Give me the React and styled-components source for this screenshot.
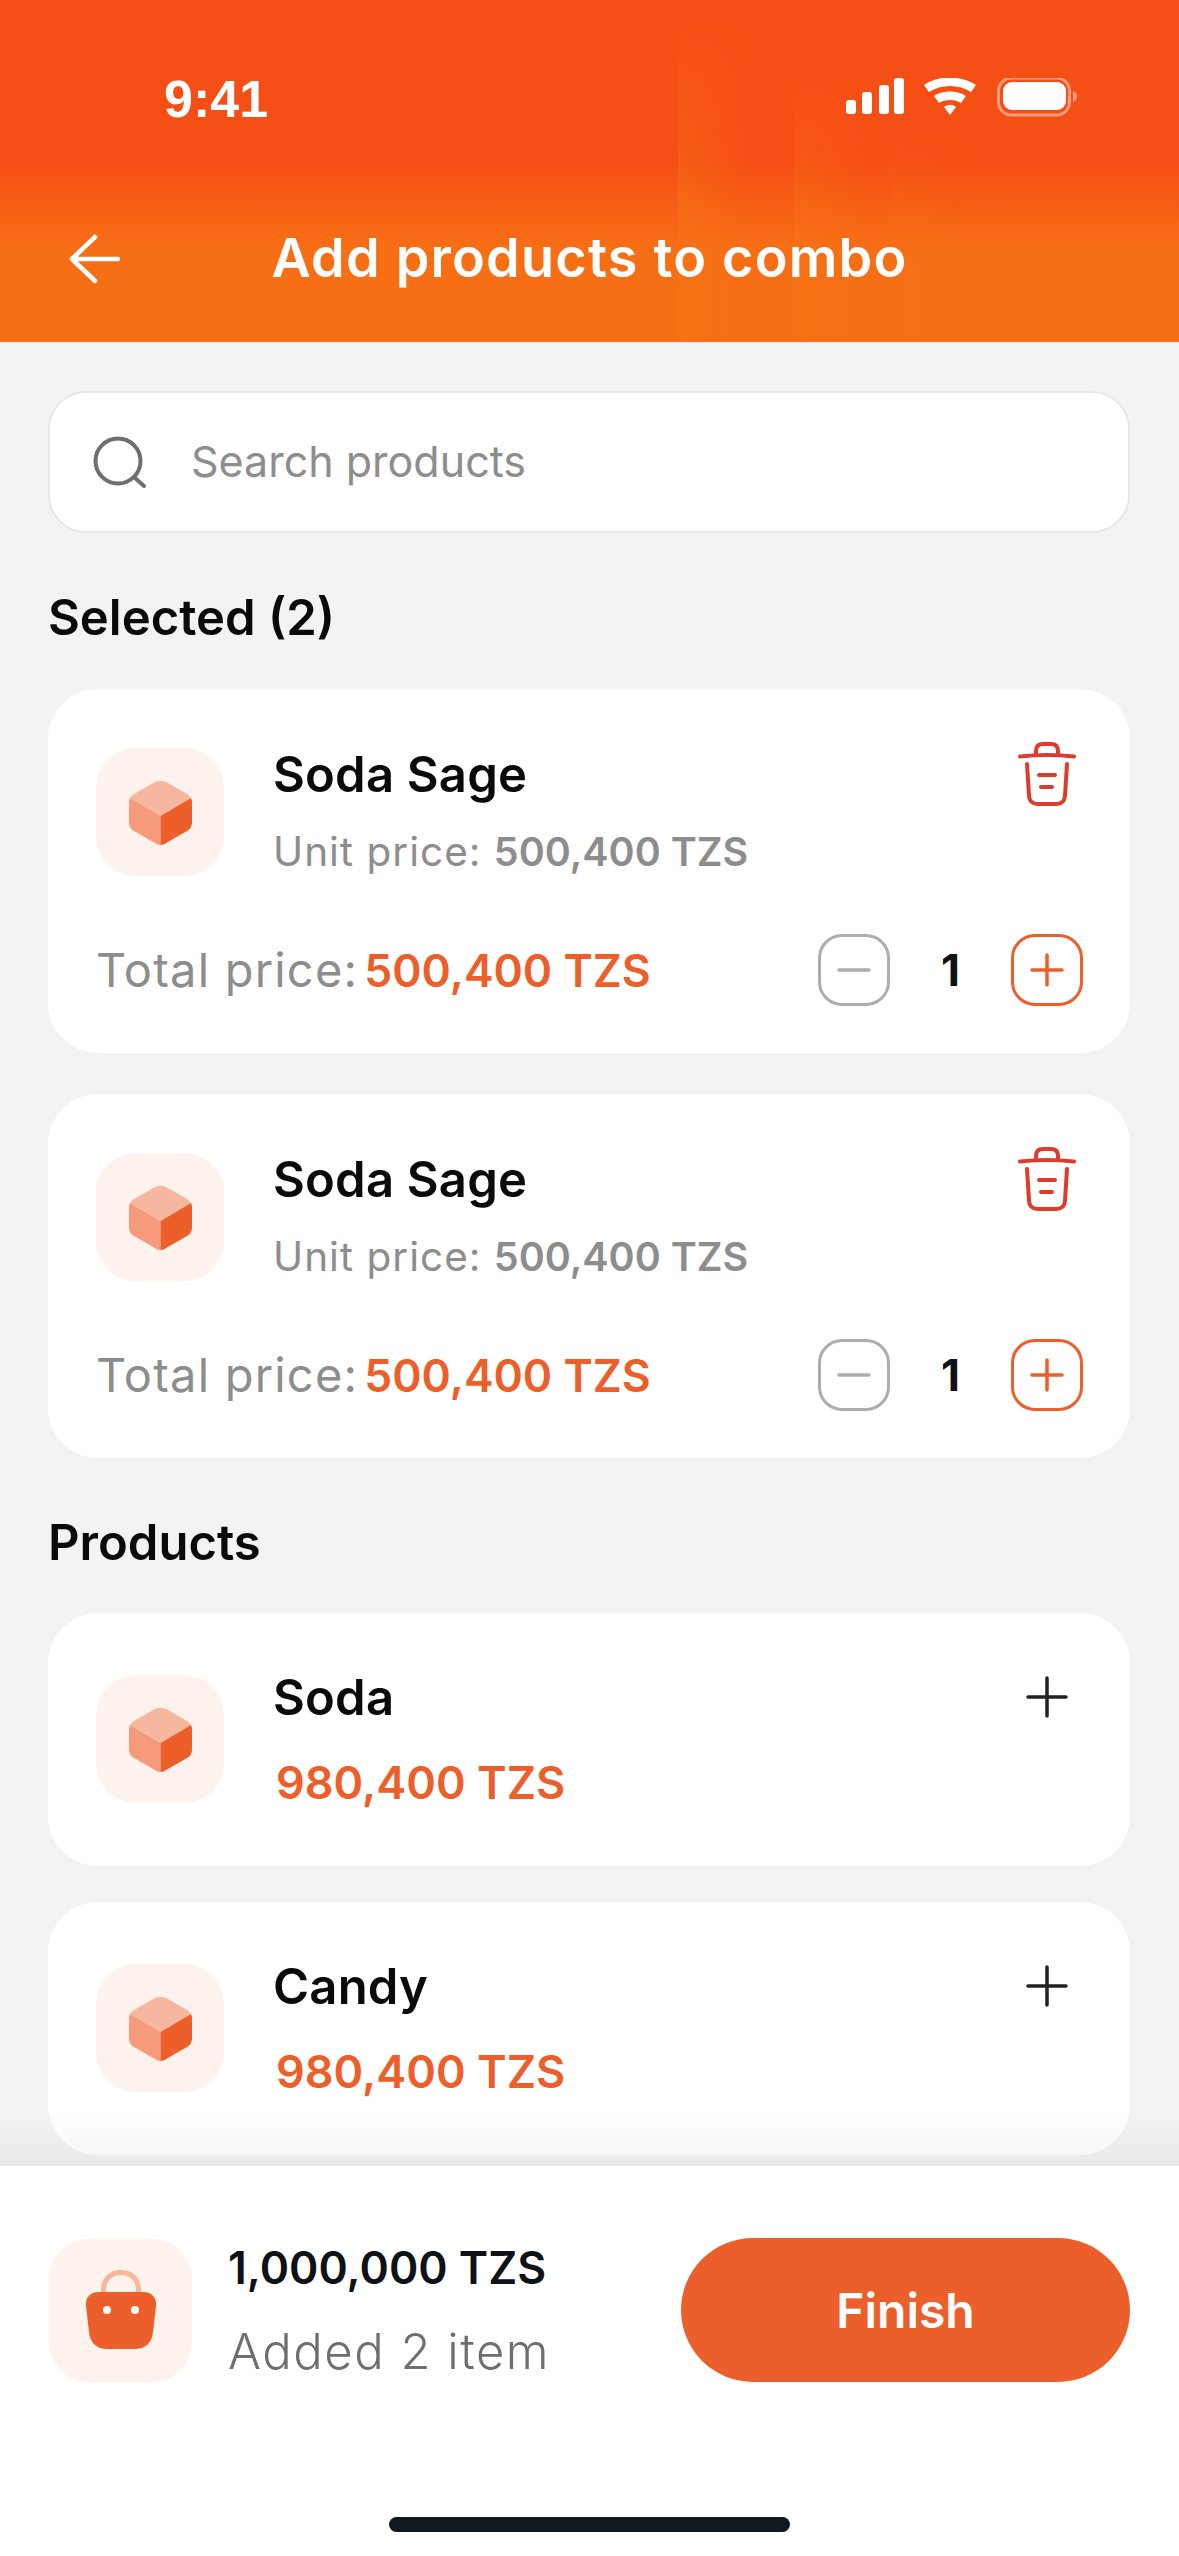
import React from 'react';
import styled, { createGlobalStyle } from 'styled-components';

const orange = '#ec5f2a';

const GlobalStyle = createGlobalStyle`
  html, body {
    margin: 0;
    padding: 0;
    background: #f3f3f3;
  }
  * {
    box-sizing: border-box;
  }
`;

const Page = styled.div`
  width: 1179px;
  height: 2556px;
  display: flex;
  flex-direction: column;
  overflow: hidden;
  background: #f3f3f3;
  font-family: Inter, 'Open Sans', sans-serif;
  color: #0e1116;
`;

const Header = styled.header`
  position: relative;
  height: 342px;
  flex-shrink: 0;
  color: #fff;
  background: linear-gradient(180deg, #f64f15 0, #f64f15 165px, #f76f15 250px, #f76f15 100%);
`;

// faint vertical light bands behind the header text
const Band = styled.div`
  position: absolute;
  left: ${({ $left }) => $left}px;
  top: ${({ $top }) => $top}px;
  bottom: 0;
  width: ${({ $width }) => $width}px;
  background: linear-gradient(90deg, rgba(247, 115, 22, ${({ $alpha }) => $alpha}), rgba(247, 115, 22, 0));
  -webkit-mask-image: linear-gradient(180deg, transparent, #000 65%);
  mask-image: linear-gradient(180deg, transparent, #000 65%);
`;

const StatusBar = styled.div`
  position: relative;
  height: 192px;
  padding: 73px 101px 0 164px;
  display: flex;
  justify-content: space-between;
  align-items: flex-start;
`;

const Clock = styled.span`
  font-family: 'Liberation Sans', Arial, sans-serif;
  font-size: 52px;
  font-weight: 700;
  line-height: 52px;
`;

const StatusIcons = styled.svg`
  display: block;
  margin-top: 5px;
`;

const TitleRow = styled.div`
  position: relative;
  display: flex;
  justify-content: center;
  align-items: center;
  height: 76px;
  margin-top: 28px;
`;

const BackIcon = styled.svg`
  position: absolute;
  left: 69px;
  top: 14px;
`;

const Title = styled.h1`
  margin: 0;
  font-size: 54px;
  font-weight: 600;
  line-height: 76px;
  letter-spacing: 1.2px;
`;

const Content = styled.main`
  flex: 1;
  min-height: 0;
  overflow: hidden;
  padding: 49px 49px 0 48px;
`;

const SearchBox = styled.div`
  height: 142px;
  display: flex;
  align-items: center;
  gap: 44px;
  padding: 0 43px;
  background: #fff;
  border: 2px solid #e7e7e7;
  border-radius: 38px;
`;

const Placeholder = styled.span`
  margin-top: -2px;
  font-size: 43px;
  font-weight: 400;
  color: #8d8d8d;
`;

const SectionTitle = styled.h2`
  margin: ${({ $top }) => $top}px 0 ${({ $bottom }) => $bottom}px 0;
  font-size: 49px;
  font-weight: 600;
  line-height: 60px;
  color: #0a0a0a;
`;

const Card = styled.section`
  background: #fff;
  border-radius: 50px;
  padding: ${({ $compact }) => ($compact ? '62px 47px 0 48px' : '59px 47px 49px 48px')};
  height: ${({ $compact }) => ($compact ? '253px' : '364px')};
  margin-bottom: ${({ $gap }) => $gap}px;
`;

const TopRow = styled.div`
  display: flex;
  align-items: flex-start;
`;

const Tile = styled.div`
  width: ${({ $size }) => $size}px;
  height: ${({ $size }) => $size}px;
  flex-shrink: 0;
  display: flex;
  align-items: center;
  justify-content: center;
  background: #fef2ec;
  border-radius: 40px;
`;

const Info = styled.div`
  flex: 1;
  margin-left: 49px;
  padding-top: ${({ $compact }) => ($compact ? '0' : '1px')};
`;

const Name = styled.div`
  font-size: 49px;
  font-weight: 600;
  line-height: 52px;
  letter-spacing: 0.2px;
  color: #0a0a0a;
  margin-top: ${({ $compact }) => ($compact ? '-3px' : '0')};
`;

const UnitPrice = styled.div`
  margin-top: 25px;
  font-size: 40.500px;
  font-weight: 400;
  letter-spacing: 1px;
  line-height: 52px;
  color: #8d8d8d;

  b {
    font-size: 39.500px;
    font-weight: 600;
    letter-spacing: 0;
  }
`;

const ProductPrice = styled.div`
  margin: 33px 0 0 3px;
  font-size: 45px;
  font-weight: 600;
  line-height: 52px;
  color: ${orange};
`;

const CornerIcon = styled.svg`
  flex-shrink: 0;
  margin: ${({ $margin }) => $margin};
`;

const BottomRow = styled.div`
  display: flex;
  align-items: center;
  justify-content: space-between;
  margin-top: 56px;
  height: 71px;
`;

const TotalLabel = styled.div`
  font-size: 47px;
  font-weight: 400;
  letter-spacing: 1.2px;
  color: #8d8d8d;

  b {
    margin-left: 6px;
    font-size: 44.500px;
    font-weight: 600;
    letter-spacing: 0;
    color: ${orange};
  }
`;

const Stepper = styled.div`
  display: flex;
  align-items: center;
`;

const StepButton = styled.div`
  width: 72px;
  height: 72px;
  display: flex;
  align-items: center;
  justify-content: center;
  border: 3px solid ${({ $color }) => $color};
  border-radius: 24px;
`;

const Quantity = styled.span`
  width: 121px;
  text-align: center;
  font-size: 44px;
  font-weight: 700;
  color: #0e1116;
`;

const BottomBar = styled.footer`
  position: relative;
  flex-shrink: 0;
  height: 390px;
  padding: 72px 49px 24px 49px;
  background: #fff;

  &::before {
    content: '';
    position: absolute;
    left: 0;
    right: 0;
    bottom: 100%;
    height: 56px;
    background: linear-gradient(180deg, rgba(0, 0, 0, 0), rgba(0, 0, 0, 0.04));
  }
`;

const Summary = styled.div`
  height: 144px;
  display: flex;
  align-items: center;
`;

const SummaryText = styled.div`
  flex: 1;
  margin-left: 36px;
`;

const Amount = styled.div`
  font-size: 44.500px;
  font-weight: 600;
  line-height: 52px;
  color: #0e1116;
`;

const Added = styled.div`
  margin-top: 32px;
  font-size: 49px;
  font-weight: 300;
  letter-spacing: 1.5px;
  line-height: 52px;
  color: #6e6e6e;
`;

const FinishButton = styled.button`
  width: 449px;
  height: 144px;
  border: none;
  border-radius: 72px;
  background: ${orange};
  color: #fff;
  font-family: inherit;
  font-size: 48px;
  font-weight: 600;
`;

const HomeIndicator = styled.div`
  width: 401px;
  height: 15px;
  margin: 135px auto 0;
  border-radius: 8px;
  background: #101820;
`;

const Cube = () => (
  <svg width="63" height="65" viewBox="0 0 63 65">
    <path fill="#f7b79e" d="M25 2.5Q31.5-1 38 2.5L58 14Q61 16 62 18L31.5 36 1 18Q2 16 5 14Z" />
    <path fill="#f59a7a" d="M1 18L31.5 36V65Q28 65 25 62.5L5 51Q0 48 0 43V22Q0 20 1 18Z" />
    <path fill={orange} d="M62 18L31.5 36V65Q35 65 38 62.5L58 51Q63 48 63 43V22Q63 20 62 18Z" />
  </svg>
);

const Bag = () => (
  <svg width="72" height="80" viewBox="0 0 72 80">
    <path fill="none" stroke="#f7b79e" strokeWidth="5" d="M18.500 24V20C18.500 9 26 2.500 36 2.500S53.500 9 53.500 20V24" />
    <path
      fill={orange}
      d="M14 22H58C67 22 72 28 71 36L68 62C67 73 60 79 50 79H22C12 79 5 73 4 62L1 36C0 28 5 22 14 22Z"
    />
    <circle cx="22" cy="40" r="4" fill="#fff" />
    <circle cx="50" cy="40" r="4" fill="#fff" />
  </svg>
);

const Trash = () => (
  <CornerIcon as="svg" $margin="-6px 7px 0 0" width="58" height="64" viewBox="0 0 58 64" fill="none" stroke="#de3a2e" strokeWidth="4" strokeLinecap="round">
    <path d="M2 14.5Q29 11.500 56 14.500" />
    <path d="M18 12V9Q18 2 25 2H33Q40 2 40 9V12" />
    <path d="M9 22L11 54Q11.500 62 20 62H38Q46.500 62 47 54L49 22" />
    <path d="M21 33H37M23 45H34" />
  </CornerIcon>
);

const AddIcon = () => (
  <CornerIcon as="svg" $margin="1px 15px 0 0" width="42" height="42" viewBox="0 0 42 42" stroke="#222" strokeWidth="3.5" strokeLinecap="round">
    <path d="M21 2V40M2 21H40" />
  </CornerIcon>
);

const selected = [{ id: 1 }, { id: 2 }];

const products = [
  { name: 'Soda', price: '980,400 TZS' },
  { name: 'Candy', price: '980,400 TZS' },
];

const App = () => (
  <Page>
    <GlobalStyle />
    <Header>
      <Band $left={678} $top={20} $width={72} $alpha={0.6} />
      <Band $left={794} $top={75} $width={80} $alpha={0.55} />
      <Band $left={890} $top={130} $width={85} $alpha={0.3} />
      <StatusBar>
        <Clock>9:41</Clock>
        <StatusIcons width="232" height="40" viewBox="0 0 232 40">
          <g fill="#fff">
            <rect x="0" y="22" width="10" height="14" rx="3" />
            <rect x="16" y="14" width="10" height="22" rx="3" />
            <rect x="33" y="7" width="10" height="29" rx="3" />
            <rect x="48" y="0" width="10" height="36" rx="3" />
            <path d="M78 7C92-3 115-3 130 7L125 14C113 6 95 6 83 14Z" />
            <path d="M88 18C96 12 112 12 120 18L115 25C109 21 99 21 93 25Z" />
            <path d="M98 29C102 26 106 26 110 29L104 37Z" />
            <rect x="157" y="4" width="63" height="28" rx="9" />
          </g>
          <rect x="152.500" y="0" width="71" height="37" rx="13" fill="none" stroke="#fff" strokeOpacity="0.45" strokeWidth="3" />
          <path d="M227 13C230 14 231 16 231 18.500S230 23 227 24Z" fill="#fff" fillOpacity="0.45" />
        </StatusIcons>
      </StatusBar>
      <TitleRow>
        <BackIcon width="52" height="50" viewBox="0 0 52 50" fill="none" stroke="#fff" strokeWidth="4.500" strokeLinecap="round" strokeLinejoin="round">
          <path d="M26 3L3 25 26 47M3 25H49" />
        </BackIcon>
        <Title>Add products to combo</Title>
      </TitleRow>
    </Header>

    <Content>
      <SearchBox>
        <svg width="54" height="52" viewBox="0 0 54 52" fill="none" stroke="#6f6f6f" strokeWidth="4" strokeLinecap="round">
          <circle cx="25" cy="25" r="22.500" />
          <path d="M42 42L51 50" />
        </svg>
        <Placeholder>Search products</Placeholder>
      </SearchBox>

      <SectionTitle $top={55} $bottom={41}>Selected (2)</SectionTitle>
      {selected.map((item, i) => (
        <Card key={item.id} $gap={i === 0 ? 41 : 0}>
          <TopRow>
            <Tile $size={128}>
              <Cube />
            </Tile>
            <Info>
              <Name>Soda Sage</Name>
              <UnitPrice>
                Unit price: <b>500,400 TZS</b>
              </UnitPrice>
            </Info>
            <Trash />
          </TopRow>
          <BottomRow>
            <TotalLabel>
              Total price:<b>500,400 TZS</b>
            </TotalLabel>
            <Stepper>
              <StepButton $color="#adadad">
                <svg width="34" height="4" viewBox="0 0 34 4" stroke="#adadad" strokeWidth="3.500" strokeLinecap="round">
                  <path d="M2 2H32" />
                </svg>
              </StepButton>
              <Quantity>1</Quantity>
              <StepButton $color={orange}>
                <svg width="34" height="34" viewBox="0 0 34 34" stroke={orange} strokeWidth="3.500" strokeLinecap="round">
                  <path d="M17 2V32M2 17H32" />
                </svg>
              </StepButton>
            </Stepper>
          </BottomRow>
        </Card>
      ))}

      <SectionTitle $top={55} $bottom={40}>Products</SectionTitle>
      {products.map(product => (
        <Card key={product.name} $compact $gap={36}>
          <TopRow>
            <Tile $size={128}>
              <Cube />
            </Tile>
            <Info $compact>
              <Name $compact>{product.name}</Name>
              <ProductPrice>{product.price}</ProductPrice>
            </Info>
            <AddIcon />
          </TopRow>
        </Card>
      ))}
    </Content>

    <BottomBar>
      <Summary>
        <Tile $size={143}>
          <Bag />
        </Tile>
        <SummaryText>
          <Amount>1,000,000 TZS</Amount>
          <Added>Added 2 item</Added>
        </SummaryText>
        <FinishButton>Finish</FinishButton>
      </Summary>
      <HomeIndicator />
    </BottomBar>
  </Page>
);

export default App;
